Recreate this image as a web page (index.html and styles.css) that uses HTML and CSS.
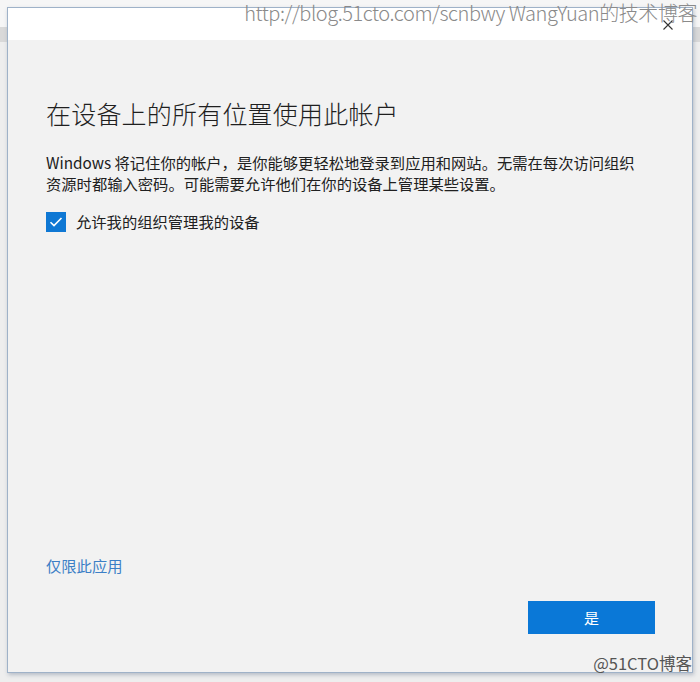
FILE: index.html
```html
<!DOCTYPE html>
<html lang="zh-CN">
<head>
<meta charset="utf-8">
<title>在设备上的所有位置使用此帐户</title>
<link rel="stylesheet" href="styles.css">
</head>
<body>
<div class="page">
  <div class="dialog">
    <div class="titlebar">
      <span class="close" aria-label="关闭">
        <svg width="10" height="10" viewBox="0 0 10 10"><path d="M0.5 0.5 L9.5 9.5 M9.5 0.5 L0.5 9.5" stroke="#333" stroke-width="1.1" fill="none"/></svg>
      </span>
    </div>
    <div class="content">
      <h1 class="title">在设备上的所有位置使用此帐户</h1>
      <p class="desc">Windows 将记住你的帐户，是你能够更轻松地登录到应用和网站。无需在每次访问组织<br>资源时都输入密码。可能需要允许他们在你的设备上管理某些设置。</p>
      <label class="check">
        <span class="box">
          <svg width="14" height="12" viewBox="0 0 14 12"><path d="M1.5 6.2 L5 9.6 L12.5 2" stroke="#fff" stroke-width="1.6" fill="none"/></svg>
        </span>
        <span class="check-label">允许我的组织管理我的设备</span>
      </label>
      <div class="spacer"></div>
      <a class="link" href="#">仅限此应用</a>
      <div class="footer">
        <span class="btn">是</span>
      </div>
    </div>
  </div>
  <div class="wm-top">http://blog.51cto.com/scnbwy WangYuan的技术博客</div>
  <div class="wm-bottom">@51CTO博客</div>
</div>
</body>
</html>
```
FILE: styles.css
```css
html, body {
  margin: 0;
  padding: 0;
}
body {
  width: 700px;
  height: 682px;
  overflow: hidden;
  font-family: "Noto Sans CJK SC", "Noto Sans", "Liberation Sans", sans-serif;
  background: linear-gradient(to bottom, #f6f6f6 0, #f6f6f6 27px, #d9d9d9 27px, #d9d9d9 42px, #eeeeee 42px);
}
.page {
  position: relative;
  width: 700px;
  height: 682px;
  padding: 7px 0 0 7px;
  box-sizing: border-box;
}
.dialog {
  width: 686px;
  height: 666px;
  box-sizing: border-box;
  border: 1px solid #9fb2c8;
  background: #f2f2f2;
  box-shadow: 1px 2px 4px rgba(80, 100, 130, 0.35);
  display: flex;
  flex-direction: column;
}
.titlebar {
  height: 32px;
  background: #ffffff;
  display: flex;
  justify-content: flex-end;
  align-items: center;
  padding-right: 19px;
  flex: none;
}
.close {
  display: flex;
  width: 10px;
  height: 10px;
  margin-top: 1px;
}
.content {
  flex: 1;
  display: flex;
  flex-direction: column;
  padding: 56px 37px 38px 38px;
}
.title {
  margin: 0;
  font-size: 25px;
  line-height: 34px;
  font-weight: 300;
  color: #1f1f1f;
  letter-spacing: 0.2px;
}
.desc {
  margin: 22px 0 0 0;
  font-size: 15.3px;
  line-height: 21px;
  color: #202020;
  white-space: nowrap;
}
.check {
  margin-top: 17px;
  display: flex;
  align-items: center;
  gap: 10px;
}
.box {
  width: 20px;
  height: 20px;
  background: #0f78d4;
  display: flex;
  align-items: center;
  justify-content: center;
}
.check-label {
  font-size: 15.3px;
  line-height: 21px;
  color: #202020;
}
.spacer {
  flex: 1;
}
.link {
  font-size: 15.3px;
  line-height: 21px;
  color: #3c7fc6;
  text-decoration: none;
  align-self: flex-start;
}
.footer {
  margin-top: 25px;
  display: flex;
  justify-content: flex-end;
}
.btn {
  width: 127px;
  height: 33px;
  background: #0a78d7;
  color: #ffffff;
  font-size: 15px;
  display: flex;
  align-items: center;
  justify-content: center;
}
.wm-top {
  position: absolute;
  top: 1px;
  right: 3px;
  font-family: "Noto Sans CJK SC", "DejaVu Sans", sans-serif;
  font-weight: 300;
  font-size: 20px;
  line-height: 24px;
  color: #8a8a8a;
  white-space: nowrap;
  letter-spacing: -0.45px;
}
.wm-bottom {
  position: absolute;
  right: 8px;
  bottom: 9px;
  font-size: 16.5px;
  line-height: 20px;
  color: #555555;
  white-space: nowrap;
  letter-spacing: 0;
}
```
